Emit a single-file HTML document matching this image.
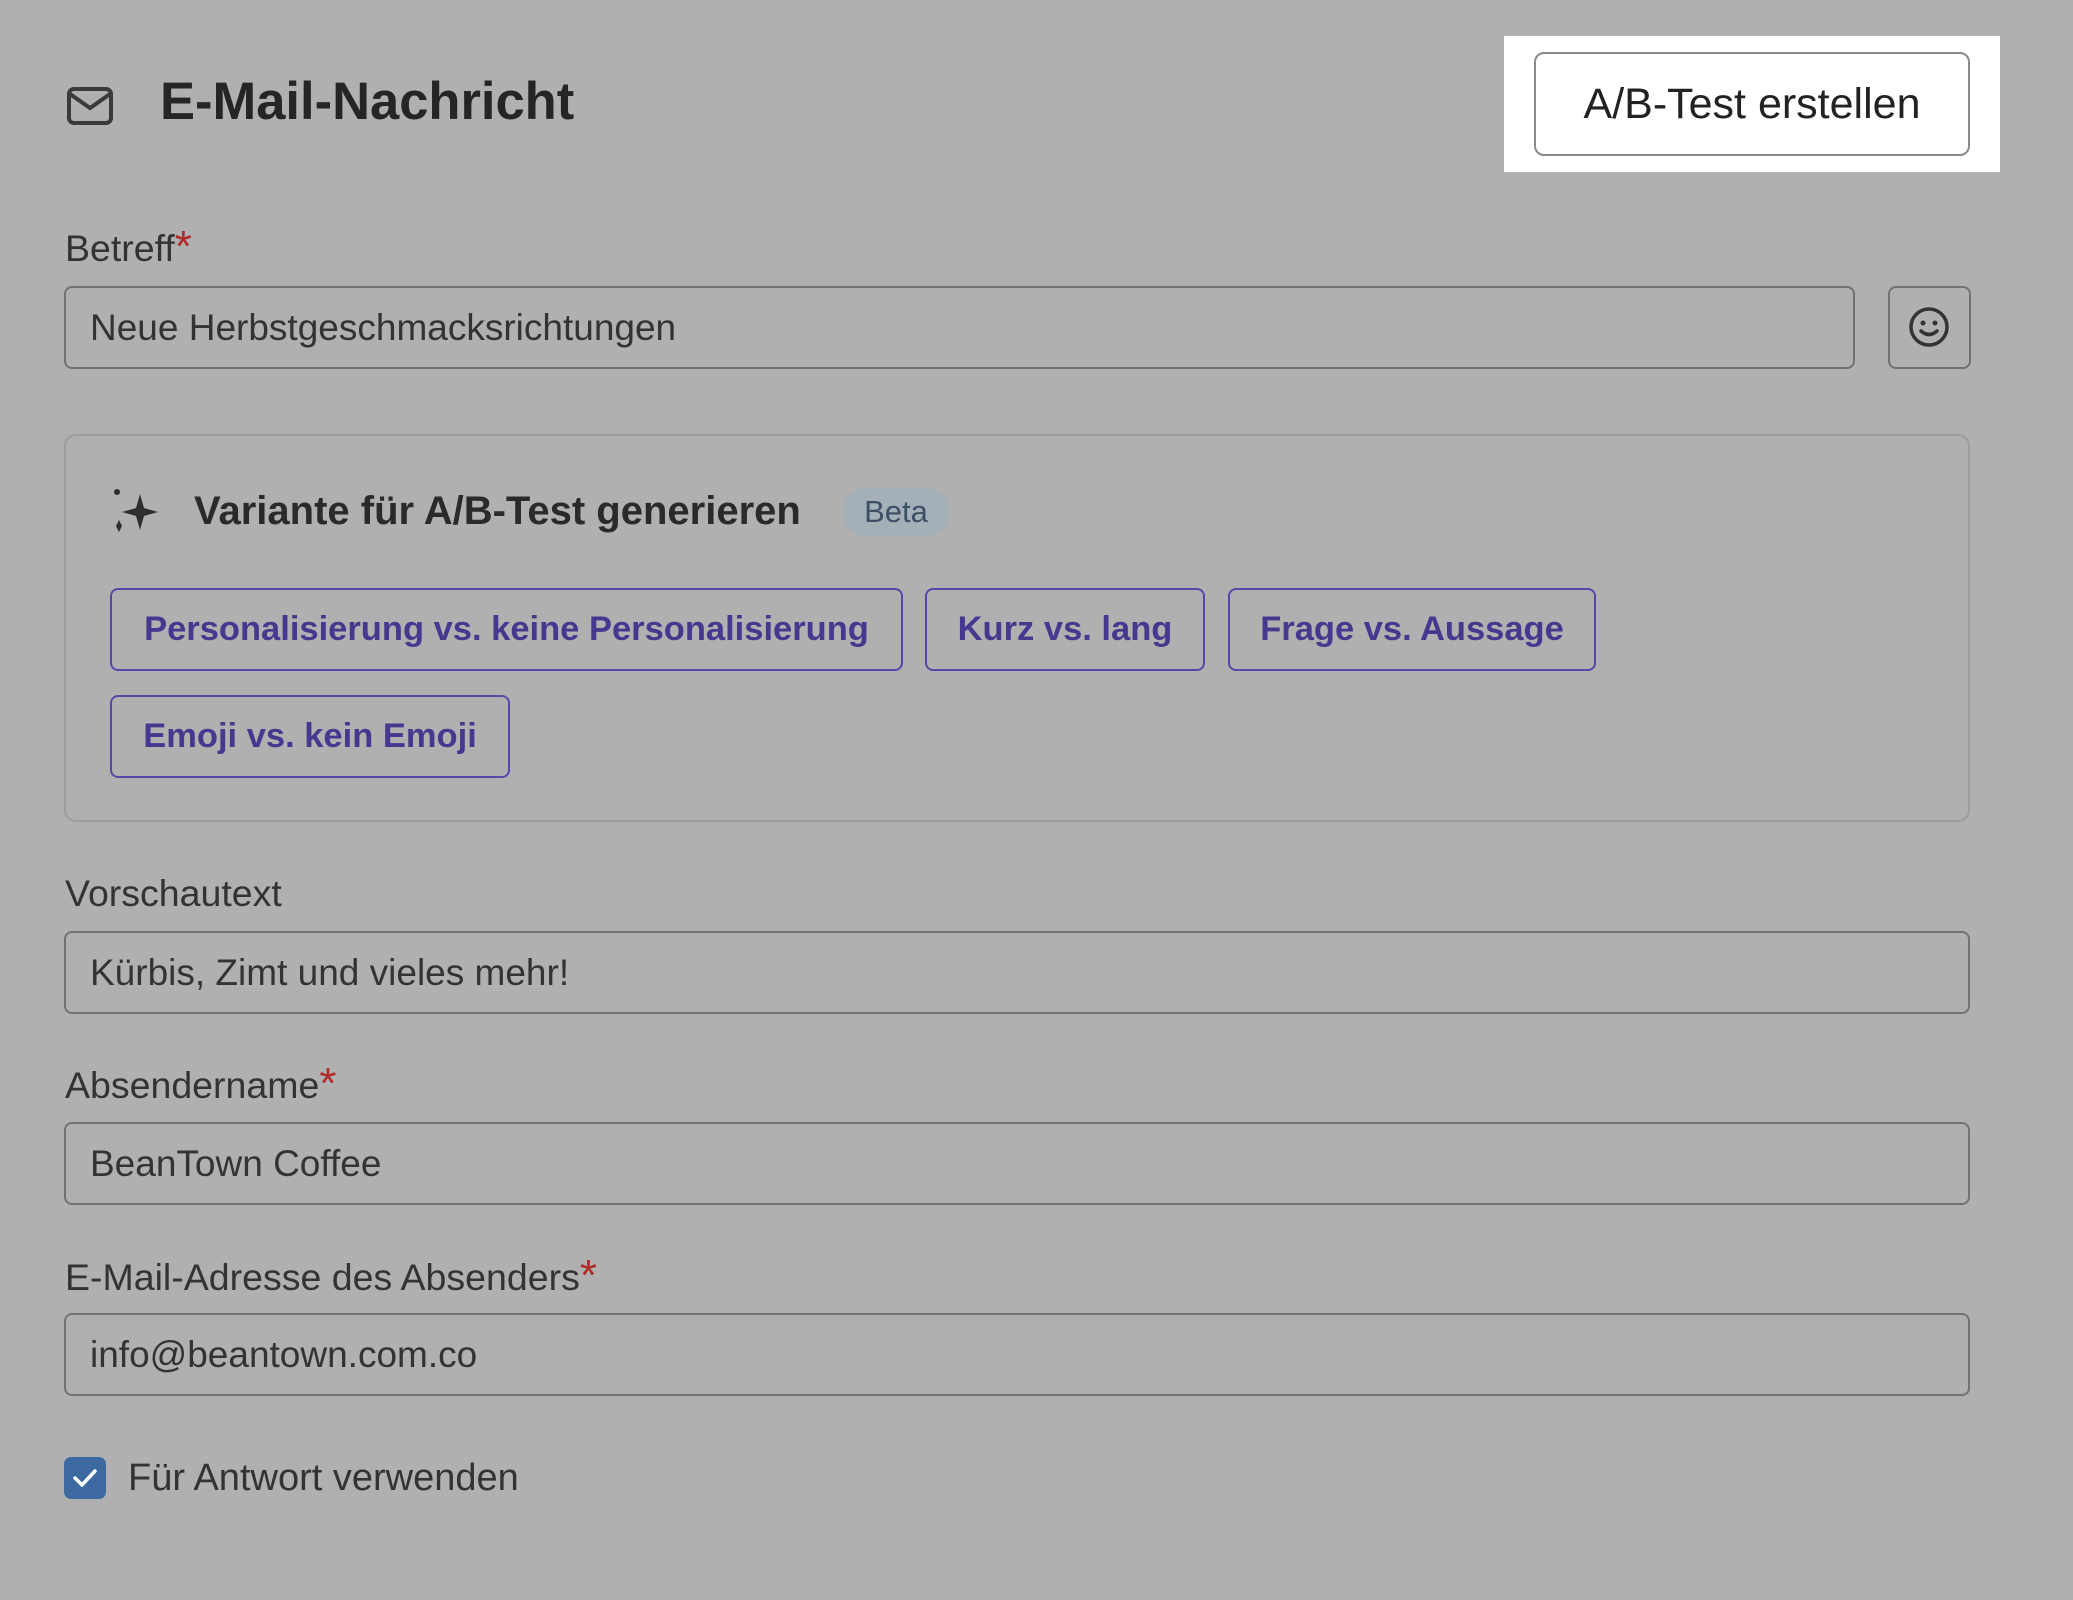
<!DOCTYPE html>
<html><head><meta charset="utf-8"><style>
*{box-sizing:border-box;margin:0;padding:0}
body{width:2073px;height:1600px;background:#b0b0b0;font-family:"Liberation Sans",sans-serif;color:#2a2a2a;position:relative;overflow:hidden}
.a{position:absolute}
.lbl{position:absolute;left:65px;font-size:37.5px;color:#333;line-height:40px}
.req{color:#b02a2a;font-size:44px}
.inp{position:absolute;left:64px;width:1906px;height:83px;border:2px solid #727272;border-radius:8px;font-size:37px;color:#333;padding-left:24px;line-height:79px}
.chip{position:absolute;height:83px;border:2.5px solid #5a46a8;border-radius:8px;color:#46378f;font-weight:bold;font-size:34.5px;line-height:78px;text-align:center;white-space:nowrap}
</style></head><body>
<svg class="a" style="left:66px;top:86px" width="48" height="40" viewBox="0 0 48 40"><rect x="3" y="3" width="42" height="34" rx="5" fill="none" stroke="#3a3a3a" stroke-width="4"/><path d="M4 8 L24 22 L44 8" fill="none" stroke="#3a3a3a" stroke-width="4"/></svg>
<div class="a" style="left:160px;top:72px;font-size:52.5px;font-weight:bold;color:#252525;line-height:60px">E-Mail-Nachricht</div>
<div class="a" style="left:1504px;top:36px;width:496px;height:136px;background:#fff"></div>
<div class="a" style="left:1534px;top:52px;width:436px;height:104px;border:2px solid #8a8a8a;border-radius:10px;background:#fff;font-size:43px;text-align:center;line-height:100px;color:#222">A/B-Test erstellen</div>

<div class="lbl" style="top:227px">Betreff<span class="req">*</span></div>
<div class="inp" style="top:286px;width:1791px">Neue Herbstgeschmacksrichtungen</div>
<div class="a" style="left:1888px;top:286px;width:83px;height:83px;border:2px solid #727272;border-radius:8px"></div>
<svg class="a" style="left:1907px;top:305px" width="44" height="44" viewBox="0 0 44 44"><circle cx="22" cy="22" r="18" fill="none" stroke="#333" stroke-width="3.5"/><circle cx="16" cy="18" r="2.5" fill="#333"/><circle cx="28" cy="18" r="2.5" fill="#333"/><path d="M14 26 Q22 33 30 26" fill="none" stroke="#333" stroke-width="3.5" stroke-linecap="round"/></svg>

<div class="a" style="left:64px;top:434px;width:1906px;height:388px;border:2px solid #9c9c9c;border-radius:12px"></div>
<svg class="a" style="left:110px;top:486px" width="50" height="50" viewBox="0 0 50 50"><path d="M30 8 L34 22 L48 26 L34 30 L30 44 L26 30 L12 26 L26 22 Z" fill="#2e2e2e"/><circle cx="7" cy="6" r="3" fill="#2e2e2e"/><path d="M9 34 L12 40 L9 46 L6 40 Z" fill="#2e2e2e"/></svg>
<div class="a" style="left:194px;top:488px;font-size:40px;font-weight:bold;color:#2a2a2a;line-height:46px">Variante für A/B-Test generieren</div>
<div class="a" style="left:843px;top:487px;width:106px;height:50px;border-radius:25px;background:#a3b0b8;color:#3d4f66;font-size:31px;text-align:center;line-height:50px">Beta</div>
<div class="chip" style="left:110px;top:588px;width:793px">Personalisierung vs. keine Personalisierung</div>
<div class="chip" style="left:925px;top:588px;width:280px">Kurz vs. lang</div>
<div class="chip" style="left:1228px;top:588px;width:368px">Frage vs. Aussage</div>
<div class="chip" style="left:110px;top:695px;width:400px">Emoji vs. kein Emoji</div>

<div class="lbl" style="top:873px">Vorschautext</div>
<div class="inp" style="top:931px">Kürbis, Zimt und vieles mehr!</div>
<div class="lbl" style="top:1064px">Absendername<span class="req">*</span></div>
<div class="inp" style="top:1122px">BeanTown Coffee</div>
<div class="lbl" style="top:1256px">E-Mail-Adresse des Absenders<span class="req">*</span></div>
<div class="inp" style="top:1313px">info@beantown.com.co</div>

<div class="a" style="left:64px;top:1457px;width:42px;height:42px;border-radius:7px;background:#3c6aa0"></div>
<svg class="a" style="left:64px;top:1457px" width="42" height="42" viewBox="0 0 42 42"><path d="M11 21 L18 28 L31 14" fill="none" stroke="#fff" stroke-width="3.5" stroke-linecap="round" stroke-linejoin="round"/></svg>
<div class="a" style="left:128px;top:1458px;font-size:38px;color:#333;line-height:40px">Für Antwort verwenden</div>
</body></html>
